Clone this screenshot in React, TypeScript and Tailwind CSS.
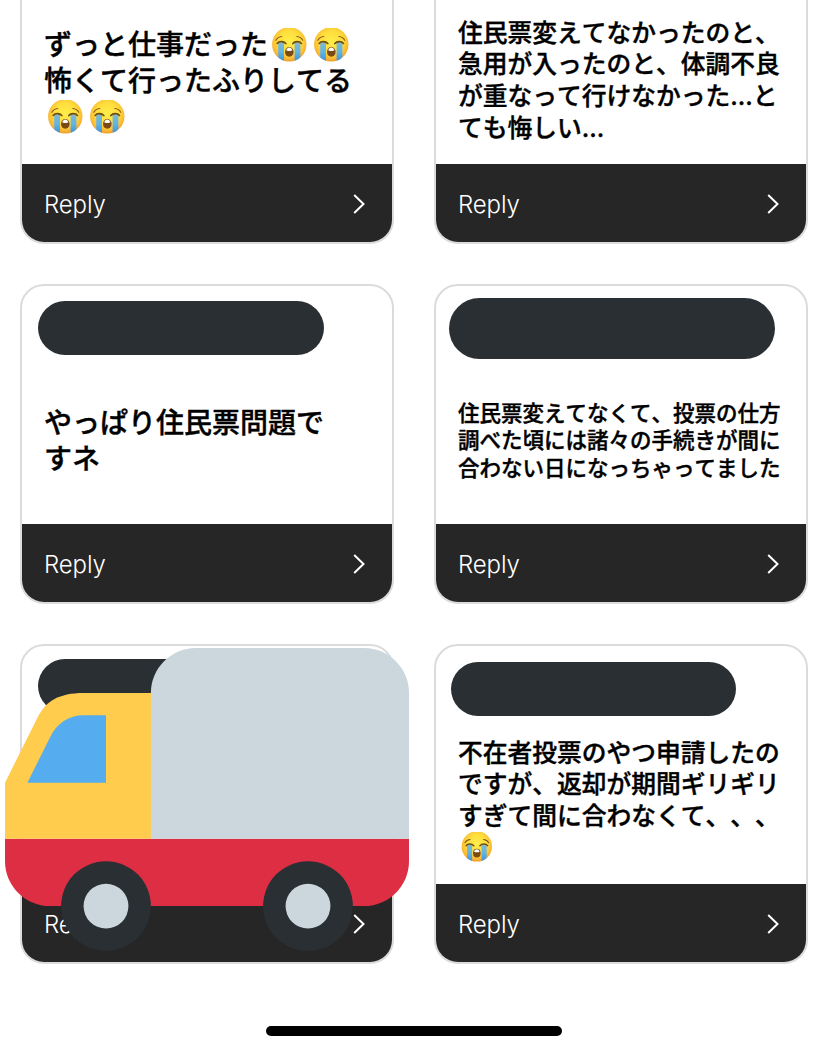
import { Fragment, useId } from 'react'
import clsx from 'clsx'

type Size = 'lg' | 'md' | 'sm'

interface Answer {
  id: string
  lines: string[]
  size: Size
  // placement of the bar that hides the user name
  mask?: string
}

const TEXT_SIZE: Record<Size, string> = {
  lg: 'text-[28px] leading-[35.6px] pt-[2px]',
  md: 'text-[24.75px] leading-[31.6px]',
  sm: 'text-[21.5px] leading-[27.3px]',
}

const ANSWERS: Answer[] = [
  { id: '1', size: 'lg', lines: ['ずっと仕事だった😭😭', '怖くて行ったふりしてる', '😭😭'] },
  {
    id: '2',
    size: 'md',
    lines: ['住民票変えてなかったのと、', '急用が入ったのと、体調不良', 'が重なって行けなかった...と', 'ても悔しい...'],
  },
  {
    id: '3',
    size: 'lg',
    lines: ['やっぱり住民票問題で', 'すネ'],
    mask: 'mt-[15px] ml-4 w-[286px] h-[54px]',
  },
  {
    id: '4',
    size: 'sm',
    lines: ['住民票変えてなくて、投票の仕方', '調べた頃には諸々の手続きが間に', '合わない日になっちゃってました'],
    mask: 'mt-3 ml-[13px] w-[326px] h-[61px]',
  },
  { id: '5', size: 'lg', lines: [], mask: 'mt-[13px] ml-4 w-[286px] h-[54px]' },
  {
    id: '6',
    size: 'md',
    lines: ['不在者投票のやつ申請したの', 'ですが、返却が期間ギリギリ', 'すぎて間に合わなくて、、、', '😭'],
    mask: 'mt-[16px] ml-[15px] w-[285px] h-[54px]',
  },
]

function CryingFace() {
  const id = useId()
  return (
    <svg viewBox="0 0 42 36" className="inline-block align-top w-[1.5em] h-[1.286em]" role="img" aria-label="😭">
      <defs>
        <radialGradient id={`${id}face`} cx="0.5" cy="0.42" r="0.6">
          <stop offset="0" stopColor="#ffee4a" />
          <stop offset="0.55" stopColor="#fedc3c" />
          <stop offset="0.82" stopColor="#fbba34" />
          <stop offset="1" stopColor="#ee9420" />
        </radialGradient>
        <linearGradient id={`${id}tear`} x1="0" y1="0" x2="0" y2="1">
          <stop offset="0" stopColor="#7fb8d0" />
          <stop offset="0.5" stopColor="#62b4e6" />
          <stop offset="1" stopColor="#3d8fdc" />
        </linearGradient>
        <clipPath id={`${id}clip`}>
          <circle cx="21.3" cy="16.3" r="17.2" />
        </clipPath>
      </defs>
      <circle cx="21.3" cy="16.3" r="17.2" fill={`url(#${id}face)`} />
      <g clipPath={`url(#${id}clip)`}>
        <path d="M10.2 14.6H16v19h-5.8zM26.6 14.6h5.8v19h-5.8z" fill={`url(#${id}tear)`} />
      </g>
      <path d="M9.2 15.4c1.8-2.3 6.3-2.5 8.6.1M24.8 15.5c2.3-2.6 6.8-2.4 8.6-.1" fill="none" stroke="#6d4b10" strokeWidth="1.7" strokeLinecap="round" />
      <path d="M7.9 12.2c1.2-2.2 3.4-3.5 5.8-3.7M34.7 12.2c-1.2-2.2-3.4-3.5-5.8-3.7" fill="none" stroke="#80591a" strokeWidth="1.2" strokeLinecap="round" />
      <ellipse cx="21.3" cy="23.9" rx="4.3" ry="4.9" fill="#7b4a12" />
      <path d="M18.2 22.2c.6-1.8 1.8-2.6 3.1-2.6s2.5.8 3.1 2.6c-1 .9-5.2.9-6.2 0z" fill="#fff" />
    </svg>
  )
}

function Truck() {
  return (
    <svg viewBox="0 8 36 27" className="absolute left-[5px] top-[647.5px] w-[404px] h-[303px]" aria-hidden="true">
      <path fill="#dd2e44" d="M0 25v2c0 2.2 1.8 4 4 4h28c2.2 0 4-1.8 4-4v-2z" />
      <path fill="#ffcc4d" d="M13.1 12H7c-2.2 0-3.35.75-4 2l-3 6v5h13.1z" />
      <path fill="#55acee" d="M9 14H7c-1.3 0-2.4.7-3 2l-2 4h7z" />
      <path fill="#ccd6dd" d="M17 8h15c2.2 0 4 1.8 4 4v13H13V12c0-2.2 1.8-4 4-4z" />
      <circle cx="9" cy="31" r="4" fill="#292f33" />
      <circle cx="9" cy="31" r="2" fill="#ccd6dd" />
      <circle cx="27" cy="31" r="4" fill="#292f33" />
      <circle cx="27" cy="31" r="2" fill="#ccd6dd" />
    </svg>
  )
}

function Line({ text }: { text: string }) {
  const parts = text.split('😭')
  return (
    <p>
      {parts.map((part, i) => (
        <Fragment key={i}>
          {i > 0 && <CryingFace />}
          {part}
        </Fragment>
      ))}
    </p>
  )
}

function AnswerCard({ answer }: { answer: Answer }) {
  return (
    <article className="flex flex-col h-80 rounded-[24px] border-2 border-[#dbdbdb] bg-white overflow-hidden">
      <div className="flex items-start h-[72px] shrink-0">
        {answer.mask && <div className={clsx('shrink-0 rounded-full bg-[#292f33]', answer.mask)} />}
      </div>

      <div
        className={clsx(
          "flex-1 flex flex-col justify-center pl-[22px] whitespace-pre font-medium text-black [-webkit-text-stroke:0.4px_black] [font-kerning:none] [text-spacing-trim:space-all] font-['Inter','Noto_Sans_CJK_JP',sans-serif]",
          TEXT_SIZE[answer.size],
        )}
      >
        {answer.lines.map((line) => (
          <Line key={line} text={line} />
        ))}
      </div>

      <button className="flex items-center justify-between h-[78px] shrink-0 pl-[22px] pr-[27px] pt-1 bg-[#262626] text-white font-['Inter',sans-serif] font-[350] text-2xl tracking-[-0.1px]">
        Reply
        <svg viewBox="0 0 12 20" className="w-3 h-5 mb-[3px]" fill="none" stroke="currentColor" strokeWidth="2">
          <path d="M1.2 1l9.3 9-9.3 9" />
        </svg>
      </button>
    </article>
  )
}

export default function App() {
  return (
    <div className="relative flex flex-col w-[827px] h-[1051px] bg-white overflow-hidden">
      <main className="grid grid-cols-2 gap-10 -mt-[76px] pl-5 pr-[19px]">
        {ANSWERS.map((answer) => (
          <AnswerCard key={answer.id} answer={answer} />
        ))}
      </main>

      <Truck />

      {/* Home indicator */}
      <div className="mt-[62px] ml-[266px] w-[296px] h-[10px] shrink-0 rounded-full bg-black" />
    </div>
  )
}
